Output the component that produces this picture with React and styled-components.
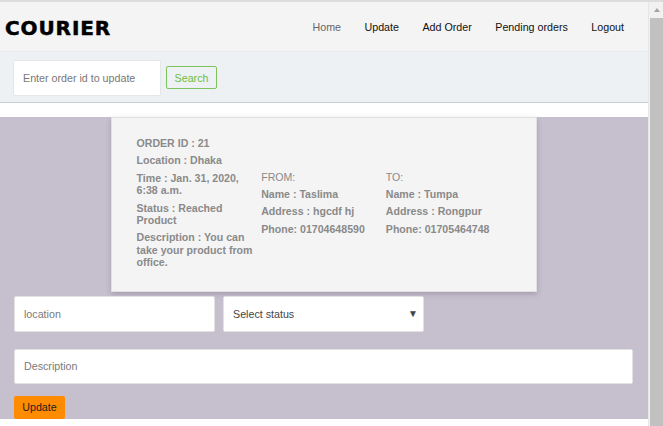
import React from 'react';
import styled, { createGlobalStyle } from 'styled-components';

const GlobalStyle = createGlobalStyle`
  html, body {
    margin: 0;
    padding: 0;
    overflow: hidden;
    background: #ffffff;
    font-family: "Liberation Sans", Arial, sans-serif;
  }
`;

const order = {
  id: 21,
  location: 'Dhaka',
  time: 'Jan. 31, 2020, 6:38 a.m.',
  status: 'Reached Product',
  description: 'You can take your product from office.',
  from: { name: 'Taslima', address: 'hgcdf hj', phone: '01704648590' },
  to: { name: 'Tumpa', address: 'Rongpur', phone: '01705464748' },
};

const navLinks = ['Home', 'Update', 'Add Order', 'Pending orders', 'Logout'];

const App = () => {
  return (
    <>
      <GlobalStyle />
      <Window>
        <Page>
          <NavBar>
            <Brand>COURIER</Brand>
            <NavList>
              {navLinks.map((link, index) => (
                <NavLink key={link} muted={index === 0}>
                  {link}
                </NavLink>
              ))}
            </NavList>
          </NavBar>

          <SearchBar>
            <SearchInput placeholder="Enter order id to update" />
            <SearchButton>Search</SearchButton>
          </SearchBar>

          <UpdateSection>
            <OrderCard>
              <Column>
                <Line>ORDER ID : {order.id}</Line>
                <Line>Location : {order.location}</Line>
                <Line>Time : {order.time}</Line>
                <Line>Status : {order.status}</Line>
                <Line>Description : {order.description}</Line>
              </Column>
              <Column>
                <Line light>FROM:</Line>
                <Line>Name : {order.from.name}</Line>
                <Line>Address : {order.from.address}</Line>
                <Line>Phone: {order.from.phone}</Line>
              </Column>
              <Column>
                <Line light>TO:</Line>
                <Line>Name : {order.to.name}</Line>
                <Line>Address : {order.to.address}</Line>
                <Line>Phone: {order.to.phone}</Line>
              </Column>
            </OrderCard>

            <FieldRow>
              <Field placeholder="location" />
              <SelectWrap>
                <Select defaultValue="">
                  <option value="">Select status</option>
                  <option value="picked">Picked</option>
                  <option value="reached">Reached Product</option>
                </Select>
              </SelectWrap>
            </FieldRow>

            <WideField placeholder="Description" />

            <UpdateButton>Update</UpdateButton>
          </UpdateSection>
        </Page>

        <Scrollbar>
          <ScrollArrow />
          <ScrollThumb />
        </Scrollbar>
      </Window>
    </>
  );
};

export default App;

const Window = styled.div`
  display: flex;
  width: 663px;
  height: 426px;
  overflow: hidden;
  border-top: 2px solid #dcdcdc;
  box-sizing: border-box;
`;

const Page = styled.div`
  flex: 1;
  min-width: 0;
  display: flex;
  flex-direction: column;
`;

const NavBar = styled.div`
  display: flex;
  align-items: center;
  justify-content: space-between;
  height: 49px;
  padding: 0 24px 0 5px;
  background: #f4f4f4;
  border-bottom: 1px solid #e6e9ed;
`;

const Brand = styled.div`
  font-family: "DejaVu Sans", "Liberation Sans", sans-serif;
  font-weight: bold;
  font-size: 20px;
  letter-spacing: 0.9px;
  color: #000000;
  -webkit-text-stroke: 0.5px #000000;
  margin-top: 2px;
`;

const NavList = styled.nav`
  display: flex;
  gap: 23.5px;
`;

const NavLink = styled.a`
  font-size: 10.7px;
  color: ${(p) => (p.muted ? '#666666' : '#111111')};
  text-decoration: none;
  cursor: pointer;
`;

const SearchBar = styled.div`
  display: flex;
  align-items: center;
  gap: 5px;
  height: 51px;
  padding: 1px 13px 0;
  box-sizing: border-box;
  background: #eef1f4;
  border-bottom: 1px solid #c9ced7;
`;

const SearchInput = styled.input`
  width: 148px;
  height: 36px;
  box-sizing: border-box;
  padding: 0 9px;
  border: 1px solid #e4e6e9;
  border-radius: 2px;
  background: #ffffff;
  font-family: "Liberation Sans", Arial, sans-serif;
  font-size: 10.7px;
  outline: none;
  &::placeholder {
    color: #777777;
  }
`;

const SearchButton = styled.button`
  width: 51px;
  height: 23px;
  padding: 0;
  border: 1px solid #7ec45e;
  border-radius: 2px;
  background: transparent;
  color: #6cbd45;
  font-family: "Liberation Sans", Arial, sans-serif;
  font-size: 10.7px;
  cursor: pointer;
`;

const UpdateSection = styled.div`
  display: flex;
  flex-direction: column;
  align-items: flex-start;
  margin-top: 14px;
  padding: 0 15px 0 14px;
  background: #c6bfcd;
`;

const OrderCard = styled.div`
  align-self: center;
  display: grid;
  grid-template-columns: repeat(3, 1fr);
  align-items: center;
  width: 426px;
  box-sizing: border-box;
  padding: 19px 25px 17px;
  background: #f4f4f4;
  border: 1px solid #e2e0e4;
  box-shadow: 0 2px 5px rgba(80, 70, 90, 0.28);
`;

const Column = styled.div`
  display: flex;
  flex-direction: column;
  min-width: 0;
`;

const Line = styled.p`
  margin: 0 0 5px;
  font-size: 10.6px;
  line-height: 12.4px;
  font-weight: ${(p) => (p.light ? 'normal' : 'bold')};
  color: #8a8a8a;
`;

const FieldRow = styled.div`
  display: flex;
  gap: 8px;
  margin-top: 4px;
`;

const Field = styled.input`
  width: 201px;
  height: 36px;
  box-sizing: border-box;
  padding: 0 9px;
  border: 1px solid #e2e2e2;
  border-radius: 2px;
  background: #ffffff;
  font-family: "Liberation Sans", Arial, sans-serif;
  font-size: 10.7px;
  outline: none;
  &::placeholder {
    color: #7a7a7a;
  }
`;

const SelectWrap = styled.div`
  position: relative;
  &::after {
    content: '▼';
    position: absolute;
    right: 6px;
    top: 12px;
    font-size: 10px;
    color: #3f454c;
    pointer-events: none;
  }
`;

const Select = styled.select`
  appearance: none;
  width: 201px;
  height: 36px;
  box-sizing: border-box;
  padding: 0 9px;
  border: 1px solid #e2e2e2;
  border-radius: 2px;
  background: #ffffff;
  color: #444444;
  font-family: "Liberation Sans", Arial, sans-serif;
  font-size: 10.7px;
  outline: none;
`;

const WideField = styled(Field)`
  width: 100%;
  height: 35px;
  margin-top: 17px;
`;

const UpdateButton = styled.button`
  width: 51px;
  height: 23px;
  margin-top: 12px;
  padding: 0;
  border: none;
  border-radius: 2px;
  background: #ff8c00;
  color: #1e1e1e;
  font-family: "Liberation Sans", Arial, sans-serif;
  font-size: 10.7px;
  cursor: pointer;
`;

const Scrollbar = styled.div`
  display: flex;
  flex-direction: column;
  align-items: flex-end;
  width: 15px;
  flex-shrink: 0;
  background: #f1f1f1;
  border-left: 1px solid #e6e6e6;
  box-sizing: border-box;
`;

const ScrollArrow = styled.div`
  align-self: center;
  width: 0;
  height: 0;
  margin: 6px 0 6px 1px;
  border-left: 3.5px solid transparent;
  border-right: 3.5px solid transparent;
  border-bottom: 4px solid #a3a3a3;
`;

const ScrollThumb = styled.div`
  flex: 1;
  width: 13px;
  background: #c1c1c1;
`;
